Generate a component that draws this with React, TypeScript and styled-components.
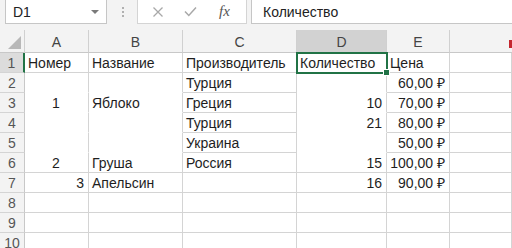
import React from "react";
import styled, { createGlobalStyle } from "styled-components";

const Global = createGlobalStyle`
  html, body {
    margin: 0;
    padding: 0;
    background: #ffffff;
  }
  body {
    font-family: "Liberation Sans", Arial, sans-serif;
    overflow: hidden;
  }
`;

const Window = styled.div`
  width: 512px;
  height: 248px;
  overflow: hidden;
  background: #f3f3f3;
`;

const Toolbar = styled.div`
  display: flex;
  align-items: flex-start;
  height: 30px;
  background: #f3f3f3;
`;

const NameBox = styled.div`
  display: flex;
  align-items: center;
  justify-content: space-between;
  box-sizing: border-box;
  margin-left: 5px;
  width: 102px;
  height: 24px;
  padding: 0 7px 0 7px;
  background: #fff;
  border: 1px solid #c6c6c6;
  border-top: none;
  font-size: 14px;
  color: #222;
`;

const Caret = styled.span`
  width: 0;
  height: 0;
  border-left: 4px solid transparent;
  border-right: 4px solid transparent;
  border-top: 4px solid #7a7a7a;
`;

const Dots = styled.div`
  display: flex;
  flex-direction: column;
  gap: 2px;
  margin: 7px 13px 0 15px;
  span {
    width: 2px;
    height: 2px;
    background: #b0b0b0;
  }
`;

const FxBox = styled.div`
  display: flex;
  align-items: center;
  box-sizing: border-box;
  width: 110px;
  height: 24px;
  padding-left: 14px;
  gap: 20px;
  background: #fff;
  border: 1px solid #d4d4d4;
  border-top: none;
`;

const Fx = styled.span`
  font-family: "Liberation Serif", "Times New Roman", serif;
  font-style: italic;
  font-size: 15px;
  color: #555;
  margin-left: 2px;
`;

const FormulaInput = styled.div`
  display: flex;
  align-items: center;
  box-sizing: border-box;
  flex: 1;
  margin-left: 4px;
  height: 24px;
  padding-left: 11px;
  background: #fff;
  border-left: 1px solid #c6c6c6;
  border-bottom: 1px solid #c6c6c6;
  font-size: 14px;
  color: #222;
`;

const Sheet = styled.div`
  display: grid;
  grid-template-columns: 25px 64px 94px 114px 90px 63px 1fr;
  grid-template-rows: 23px repeat(10, 20px);
  background: #fff;
`;

const ColHead = styled.div<{ $active?: boolean }>`
  display: flex;
  align-items: center;
  justify-content: center;
  box-sizing: border-box;
  background: ${(p) => (p.$active ? "#d2d2d2" : "#f3f3f3")};
  border-right: 1px solid #d0d0d0;
  border-bottom: 1px solid #c8c8c8;
  font-size: 14px;
  color: #444;
  padding-top: 1px;
`;

const Corner = styled(ColHead)`
  align-items: flex-end;
  justify-content: flex-end;
  padding: 0 3px 3px 0;
`;

const Tri = styled.span`
  width: 0;
  height: 0;
  border-left: 13px solid transparent;
  border-bottom: 13px solid #b8b8b8;
`;

const LastHead = styled(ColHead)`
  justify-content: flex-end;
  align-items: flex-start;
  padding-top: 10px;
  border-right: none;
`;

const RedMark = styled.span`
  width: 3px;
  height: 8px;
  background: #c4262e;
`;

const RowHead = styled.div<{ $active?: boolean }>`
  display: flex;
  align-items: center;
  justify-content: center;
  box-sizing: border-box;
  background: ${(p) => (p.$active ? "#dcdcdc" : "#f3f3f3")};
  border-right: ${(p) => (p.$active ? "2px solid #217346" : "1px solid #c8c8c8")};
  border-bottom: 1px solid #d4d4d4;
  font-size: 14px;
  color: #555;
  padding-top: 1px;
`;

const Cell = styled.div<{ $align?: string; $open?: boolean; $selected?: boolean }>`
  position: relative;
  box-sizing: border-box;
  padding: 1px 4px 0 3px;
  line-height: 19px;
  font-size: 14px;
  color: #1e1e1e;
  white-space: nowrap;
  text-align: ${(p) => p.$align || "left"};
  border-right: 1px solid #d4d4d4;
  border-bottom: 1px solid ${(p) => (p.$open ? "transparent" : "#d4d4d4")};
  ${(p) =>
    p.$selected &&
    `
    outline: 2px solid #217346;
    outline-offset: -1px;
    z-index: 1;
  `}
`;

const Handle = styled.span`
  position: absolute;
  right: -4px;
  bottom: -4px;
  width: 5px;
  height: 5px;
  background: #217346;
  border: 1px solid #fff;
`;

type C = { t?: string; a?: string; open?: boolean };

const rows: C[][] = [
  [{ t: "Номер" }, { t: "Название" }, { t: "Производитель" }, { t: "Количество" }, { t: "Цена" }, {}],
  [{ open: true }, { open: true }, { t: "Турция" }, { open: true }, { t: "60,00 ₽", a: "right" }, {}],
  [{ t: "1", a: "center", open: true }, { t: "Яблоко", open: true }, { t: "Греция" }, { t: "10", a: "right", open: true }, { t: "70,00 ₽", a: "right" }, {}],
  [{ open: true }, { open: true }, { t: "Турция" }, { t: "21", a: "right", open: true }, { t: "80,00 ₽", a: "right" }, {}],
  [{ open: true }, { open: true }, { t: "Украина" }, { open: true }, { t: "50,00 ₽", a: "right" }, {}],
  [{ t: "2", a: "center" }, { t: "Груша" }, { t: "Россия" }, { t: "15", a: "right" }, { t: "100,00 ₽", a: "right" }, {}],
  [{ t: "3", a: "right" }, { t: "Апельсин" }, {}, { t: "16", a: "right" }, { t: "90,00 ₽", a: "right" }, {}],
  [{}, {}, {}, {}, {}, {}],
  [{}, {}, {}, {}, {}, {}],
  [{}, {}, {}, {}, {}, {}],
];

const letters = ["A", "B", "C", "D", "E"];

const App = () => (
  <Window>
    <Global />
    <Toolbar>
      <NameBox>
        D1
        <Caret />
      </NameBox>
      <Dots>
        <span />
        <span />
        <span />
      </Dots>
      <FxBox>
        <svg width="12" height="12" viewBox="0 0 12 12">
          <path d="M1.5 1.5 L10.5 10.5 M10.5 1.5 L1.5 10.5" stroke="#a8a8a8" strokeWidth="1.3" fill="none" />
        </svg>
        <svg width="13" height="11" viewBox="0 0 13 11">
          <path d="M1 5.5 L4.8 9.5 L12 1.5" stroke="#a8a8a8" strokeWidth="1.5" fill="none" />
        </svg>
        <Fx>fx</Fx>
      </FxBox>
      <FormulaInput>Количество</FormulaInput>
    </Toolbar>
    <Sheet>
      <Corner>
        <Tri />
      </Corner>
      {letters.map((l) => (
        <ColHead key={l} $active={l === "D"}>
          {l}
        </ColHead>
      ))}
      <LastHead>
        <RedMark />
      </LastHead>
      {rows.map((r, i) => (
        <React.Fragment key={i}>
          <RowHead $active={i === 0}>{i + 1}</RowHead>
          {r.map((c, j) => (
            <Cell key={j} $align={c.a} $open={c.open} $selected={i === 0 && j === 3}>
              {c.t}
              {i === 0 && j === 3 && <Handle />}
            </Cell>
          ))}
        </React.Fragment>
      ))}
    </Sheet>
  </Window>
);

export default App;
